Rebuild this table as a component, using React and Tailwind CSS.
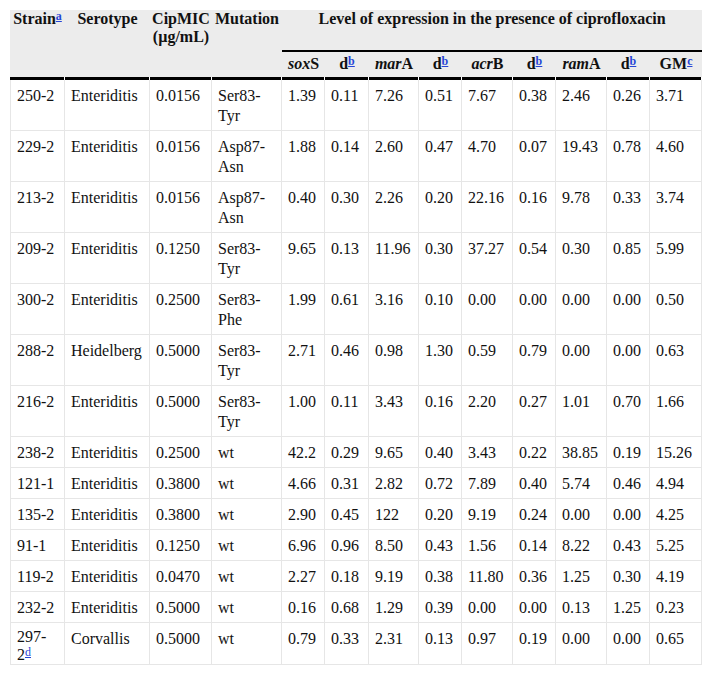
import React from "react";

const rows = [
  ["250-2", "Enteriditis", "0.0156", "Ser83-|Tyr", "1.39", "0.11", "7.26", "0.51", "7.67", "0.38", "2.46", "0.26", "3.71"],
  ["229-2", "Enteriditis", "0.0156", "Asp87-|Asn", "1.88", "0.14", "2.60", "0.47", "4.70", "0.07", "19.43", "0.78", "4.60"],
  ["213-2", "Enteriditis", "0.0156", "Asp87-|Asn", "0.40", "0.30", "2.26", "0.20", "22.16", "0.16", "9.78", "0.33", "3.74"],
  ["209-2", "Enteriditis", "0.1250", "Ser83-|Tyr", "9.65", "0.13", "11.96", "0.30", "37.27", "0.54", "0.30", "0.85", "5.99"],
  ["300-2", "Enteriditis", "0.2500", "Ser83-|Phe", "1.99", "0.61", "3.16", "0.10", "0.00", "0.00", "0.00", "0.00", "0.50"],
  ["288-2", "Heidelberg", "0.5000", "Ser83-|Tyr", "2.71", "0.46", "0.98", "1.30", "0.59", "0.79", "0.00", "0.00", "0.63"],
  ["216-2", "Enteriditis", "0.5000", "Ser83-|Tyr", "1.00", "0.11", "3.43", "0.16", "2.20", "0.27", "1.01", "0.70", "1.66"],
  ["238-2", "Enteriditis", "0.2500", "wt", "42.2", "0.29", "9.65", "0.40", "3.43", "0.22", "38.85", "0.19", "15.26"],
  ["121-1", "Enteriditis", "0.3800", "wt", "4.66", "0.31", "2.82", "0.72", "7.89", "0.40", "5.74", "0.46", "4.94"],
  ["135-2", "Enteriditis", "0.3800", "wt", "2.90", "0.45", "122", "0.20", "9.19", "0.24", "0.00", "0.00", "4.25"],
  ["91-1", "Enteriditis", "0.1250", "wt", "6.96", "0.96", "8.50", "0.43", "1.56", "0.14", "8.22", "0.43", "5.25"],
  ["119-2", "Enteriditis", "0.0470", "wt", "2.27", "0.18", "9.19", "0.38", "11.80", "0.36", "1.25", "0.30", "4.19"],
  ["232-2", "Enteriditis", "0.5000", "wt", "0.16", "0.68", "1.29", "0.39", "0.00", "0.00", "0.13", "1.25", "0.23"],
];

const widths = [55, 85, 62, 70, 43, 44, 50, 43, 51, 43, 51, 43, 52];

const Sup = ({ children }) => (
  <sup className="top-[-0.35em]">
    <a className="text-[#2545d6] underline">{children}</a>
  </sup>
);

const thLine =
  "bg-[#ececec] bg-[linear-gradient(to_right,#000_calc(100%-1px),#fff_0)] bg-[length:100%_3px] bg-bottom bg-no-repeat";

const tdBase = "border-r border-b border-[#e6e6e6] px-[6px] pt-[6px] pb-[4px] align-top leading-[20px]";

function Cell({ text, first }) {
  const parts = text.split("|");
  return (
    <td className={`${tdBase} ${first ? "border-l" : ""}`}>
      {parts.map((p, i) => (
        <React.Fragment key={i}>
          {i > 0 && <br />}
          {p}
        </React.Fragment>
      ))}
    </td>
  );
}

export default function App() {
  return (
    <div className="bg-white pl-[10px] pt-[10px] pb-[11px] text-[16px] text-[#111] font-['Liberation_Serif','Times_New_Roman',serif]">
      <table className="w-[692px] table-fixed border-separate border-spacing-0">
        <colgroup>
          {widths.map((w, i) => (
            <col key={i} style={{ width: w }} />
          ))}
        </colgroup>
        <thead>
          <tr>
            <th rowSpan={2} className={`${thLine} px-[2px] pt-0 align-top text-center font-bold leading-[18px]`}>
              Strain<Sup>a</Sup>
            </th>
            <th rowSpan={2} className={`${thLine} px-[2px] pt-0 align-top text-center font-bold leading-[18px]`}>
              Serotype
            </th>
            <th rowSpan={2} className={`${thLine} px-[2px] pt-0 align-top text-center font-bold leading-[18px]`}>
              CipMIC (µg/mL)
            </th>
            <th rowSpan={2} className={`${thLine} px-[2px] pt-0 align-top text-center font-bold leading-[18px]`}>
              Mutation
            </th>
            <th
              colSpan={9}
              className="h-[42px] border-b-2 border-black bg-[#ececec] px-[2px] pt-0 align-top text-center font-bold leading-[18px]"
            >
              Level of expression in the presence of ciprofloxacin
            </th>
          </tr>
          <tr>
            {[
              <>
                <i>sox</i>S
              </>,
              <>
                d<Sup>b</Sup>
              </>,
              <>
                <i>mar</i>A
              </>,
              <>
                d<Sup>b</Sup>
              </>,
              <>
                <i>acr</i>B
              </>,
              <>
                d<Sup>b</Sup>
              </>,
              <>
                <i>ram</i>A
              </>,
              <>
                d<Sup>b</Sup>
              </>,
              <>
                GM<Sup>c</Sup>
              </>,
            ].map((c, i) => (
              <th
                key={i}
                className={`${thLine} h-[28px] px-[2px] pt-[3px] align-top text-center font-bold leading-[18px]`}
              >
                {c}
              </th>
            ))}
          </tr>
        </thead>
        <tbody>
          {rows.map((r, ri) => (
            <tr key={ri}>
              {r.map((c, ci) => (
                <Cell key={ci} text={c} first={ci === 0} />
              ))}
            </tr>
          ))}
          <tr>
            <td className="border-l border-r border-b border-[#e6e6e6] px-[6px] pt-[5px] pb-0 align-top leading-[18px]">
              297-
              <br />
              2<Sup>d</Sup>
            </td>
            {["Corvallis", "0.5000", "wt", "0.79", "0.33", "2.31", "0.13", "0.97", "0.19", "0.00", "0.00", "0.65"].map(
              (c, i) => (
                <Cell key={i} text={c} />
              )
            )}
          </tr>
        </tbody>
      </table>
    </div>
  );
}
